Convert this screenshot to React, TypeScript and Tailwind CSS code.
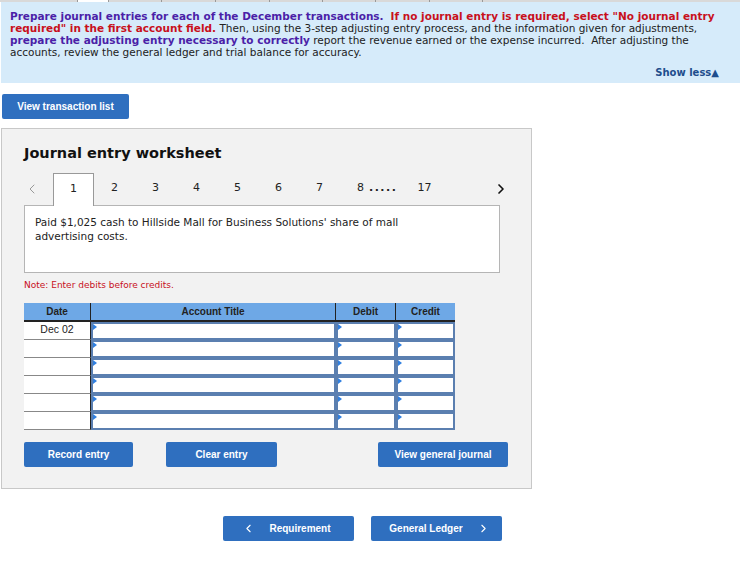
import { ChevronLeft, ChevronRight } from 'lucide-react';

const verdana = { fontFamily: '"DejaVu Sans", Verdana, sans-serif' };
const helv = { fontFamily: '"Liberation Sans", Arial, sans-serif' };

function Btn({ children, className }: { children: React.ReactNode; className: string }) {
  return (
    <button
      className={`h-[25px] rounded-[2px] bg-[#2f6fbf] text-white text-[10px] font-bold flex items-center justify-center ${className}`}
      style={helv}
    >
      {children}
    </button>
  );
}

function InputCell({ className }: { className: string }) {
  return (
    <div className={`relative h-[18px] border-2 border-[#5b7fb0] bg-white ${className}`}>
      <span className="absolute left-0 top-0 w-0 h-0 border-t-[3px] border-b-[3px] border-l-[4px] border-t-transparent border-b-transparent border-l-[#2f7fe0]" />
    </div>
  );
}

export default function App() {
  const pages = ['2', '3', '4', '5', '6', '7', '8'];
  return (
    <div className="w-[740px] h-[561px] bg-white relative overflow-hidden">
      <div className="flex h-[2px]">
        <div className="w-[78px] bg-[#d9d9d9] border-r border-[#999]" />
        <div className="w-[30px] bg-white" />
        <div className="w-[54px] bg-[#d9d9d9] border-x border-[#999]" />
        <div className="w-[54px] bg-[#d9d9d9] border-r border-[#999]" />
        <div className="w-[54px] bg-[#d9d9d9] border-r border-[#999]" />
        <div className="w-[53px] bg-[#d9d9d9] border-r border-[#999]" />
        <div className="w-[53px] bg-[#d9d9d9] border-r border-[#999]" />
        <div className="w-[54px] bg-[#d9d9d9] border-r border-[#999]" />
        <div className="w-[53px] bg-[#d9d9d9] border-r border-[#999]" />
        <div className="flex-1 bg-[#d9d9d9]" />
      </div>
      <div className="ml-[1px] bg-[#d6ebfa] h-[81px] pl-[9px] pr-[8px] pt-[8px] relative" style={verdana}>
        <p className="text-[10.5px] leading-[12px] text-[#222] whitespace-nowrap">
          <b className="text-[#4b1fa8]">Prepare journal entries for each of the December transactions.</b>{' '}
          <b className="text-[#c8101c]">&nbsp;If no journal entry is required, select "No journal entry</b>
          <br />
          <b className="text-[#c8101c]">required" in the first account field.</b> Then, using the 3-step adjusting entry
          process, and the information given for adjustments,
          <br />
          <b className="text-[#4b1fa8]">prepare the adjusting entry necessary to correctly</b> report the revenue earned or
          the expense incurred. &nbsp;After adjusting the
          <br />
          accounts, review the general ledger and trial balance for accuracy.
        </p>
        <div className="absolute right-[21px] top-[63px] text-[10px] font-bold text-[#1e4d8c]">Show less▲</div>
      </div>

      <div className="mt-[11px] ml-[2px]">
        <Btn className="w-[127px] h-[24px]">View transaction list</Btn>
      </div>

      <div className="mt-[9px] ml-[1px] w-[531px] h-[361px] bg-[#f2f2f2] border border-[#c8c8c8] pl-[22px] pt-[14px]">
        <h2 className="text-[14.5px] font-bold text-[#111] leading-[20px]" style={verdana}>
          Journal entry worksheet
        </h2>
        <div className="mt-[9px] h-[33px] flex items-end text-[11px] text-[#222]" style={verdana}>
          <div className="w-[29px] h-full flex items-center">
            <ChevronLeft size={16} strokeWidth={1.5} className="text-[#999]" />
          </div>
          <div className="w-[41px] h-[33px] bg-white border-x border-t border-[#999] flex items-center justify-center relative z-10 -mb-px pb-[1px]">
            1
          </div>
          {pages.map((p) => (
            <div key={p} className="w-[41px] h-full flex items-center justify-center">
              {p}
            </div>
          ))}
          <div className="h-full flex items-center -ml-[12px] font-bold tracking-[1.5px]">.....</div>
          <div className="h-full flex items-center ml-[20px]">17</div>
          <div className="h-full flex items-center ml-[62px]">
            <ChevronRight size={16} strokeWidth={2.5} className="text-[#111]" />
          </div>
        </div>
        <div className="w-[476px] h-[68px] bg-white border border-[#b5b5b5] px-[10px] pt-[9px]" style={verdana}>
          <p className="text-[10.5px] leading-[14px] text-[#222] w-[400px]">
            Paid $1,025 cash to Hillside Mall for Business Solutions' share of mall advertising costs.
          </p>
        </div>
        <p className="mt-[6px] text-[9px] text-[#c8101c]" style={verdana}>
          Note: Enter debits before credits.
        </p>

        <div className="mt-[10px] w-[431px]" style={helv}>
          <div className="flex h-[19px] bg-[#6ea8e6] border-b-2 border-[#222] text-[10px] font-bold text-[#222]">
            <div className="w-[67px] flex items-center justify-center border-r border-[#222]">Date</div>
            <div className="w-[245px] flex items-center justify-center border-r border-[#222]">Account Title</div>
            <div className="w-[60px] flex items-center justify-center border-r border-[#222]">Debit</div>
            <div className="w-[59px] flex items-center justify-center">Credit</div>
          </div>
          {[0, 1, 2, 3, 4, 5].map((i) => (
            <div key={i} className="flex">
              <div className="w-[67px] h-[18px] bg-white border-b border-[#888] border-r border-r-[#222] text-[10.5px] text-[#222] flex items-center justify-center">
                {i === 0 ? 'Dec 02' : ''}
              </div>
              <InputCell className="w-[245px]" />
              <InputCell className="w-[60px]" />
              <InputCell className="w-[59px]" />
            </div>
          ))}
        </div>

        <div className="mt-[12px] flex">
          <Btn className="w-[109px]">Record entry</Btn>
          <Btn className="w-[111px] ml-[33px]">Clear entry</Btn>
          <Btn className="w-[130px] ml-[101px]">View general journal</Btn>
        </div>
      </div>

      <div className="mt-[27px] flex ml-[223px] gap-[17px]">
        <Btn className="w-[131px] gap-[14px]">
          <ChevronLeft size={13} strokeWidth={2} />
          <span className="mr-[4px]">Requirement</span>
        </Btn>
        <Btn className="w-[131px] gap-[14px]">
          <span className="ml-[6px]">General Ledger</span>
          <ChevronRight size={13} strokeWidth={2} />
        </Btn>
      </div>
    </div>
  );
}
